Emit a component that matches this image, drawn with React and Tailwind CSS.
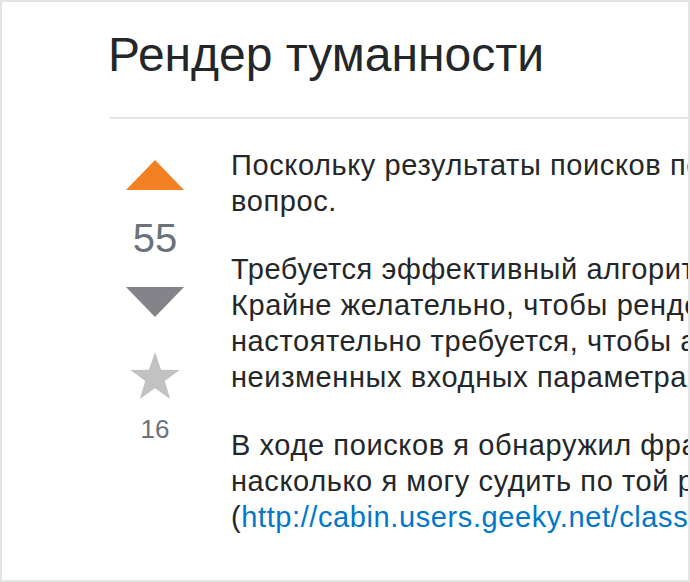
const VoteCell = () => (
  <div className="w-[90px] shrink-0 flex flex-col items-center pt-[41px]">
    <svg width="58" height="30" viewBox="0 0 58 30">
      <path d="M0 30 L29 0 L58 30 Z" fill="#f48024" />
    </svg>
    <div className="text-[40px] leading-none text-[#6a737c] mt-[28px]">55</div>
    <svg className="mt-[29px]" width="58" height="30" viewBox="0 0 58 30">
      <path d="M0 0 L58 0 L29 30 Z" fill="#848389" />
    </svg>
    <svg className="mt-[35px]" width="50" height="47" viewBox="1.4 1.5 21.2 20.2">
      <path
        d="M12 1.5 L14.6 9.1 L22.6 9.2 L16.2 14 L18.5 21.7 L12 17.1 L5.5 21.7 L7.8 14 L1.4 9.2 L9.4 9.1 Z"
        fill="#c2c2c2"
      />
    </svg>
    <div className="text-[26px] leading-none text-[#6a737c] mt-[17px]">16</div>
  </div>
);

export default function App() {
  return (
    <div
      className="w-[690px] h-[582px] border-2 border-[#e4e4e4] bg-white overflow-hidden"
      style={{ fontFamily: '"Liberation Sans", Arial, sans-serif' }}
    >
      <div className="pl-[108px]">
        <h1 className="text-[48px] leading-none text-[#242729] pt-[29px] mb-[38px] -ml-[2px] whitespace-nowrap">
          Рендер туманности
        </h1>
        <div className="h-[2px] bg-[#e6e6e6]" />
        <div className="flex">
          <VoteCell />
          <div className="pl-[31px] pt-[28px] text-[29px] tracking-[0.6px] leading-[36px] text-[#242729] whitespace-nowrap">
            <p className="mb-[32px]">
              Поскольку результаты поисков по этой теме оказались скудными, я задаю этот
              <br />
              вопрос.
            </p>
            <p className="mb-[32px]">
              Требуется эффективный алгоритм рендеринга туманности в реальном времени.
              <br />
              Крайне желательно, чтобы рендеринг выглядел реалистично, и
              <br />
              настоятельно требуется, чтобы алгоритм давал один и тот же результат при
              <br />
              неизменных входных параметрах.
            </p>
            <p>
              В ходе поисков я обнаружил фрагмент кода, который выглядит многообещающе,
              <br />
              насколько я могу судить по той работе, на которую он ссылается
              <br />
              (
              <a href="#" className="text-[#0077cc]">
                http://cabin.users.geeky.net/classes/nebula.html
              </a>
              ).
            </p>
          </div>
        </div>
      </div>
    </div>
  );
}
